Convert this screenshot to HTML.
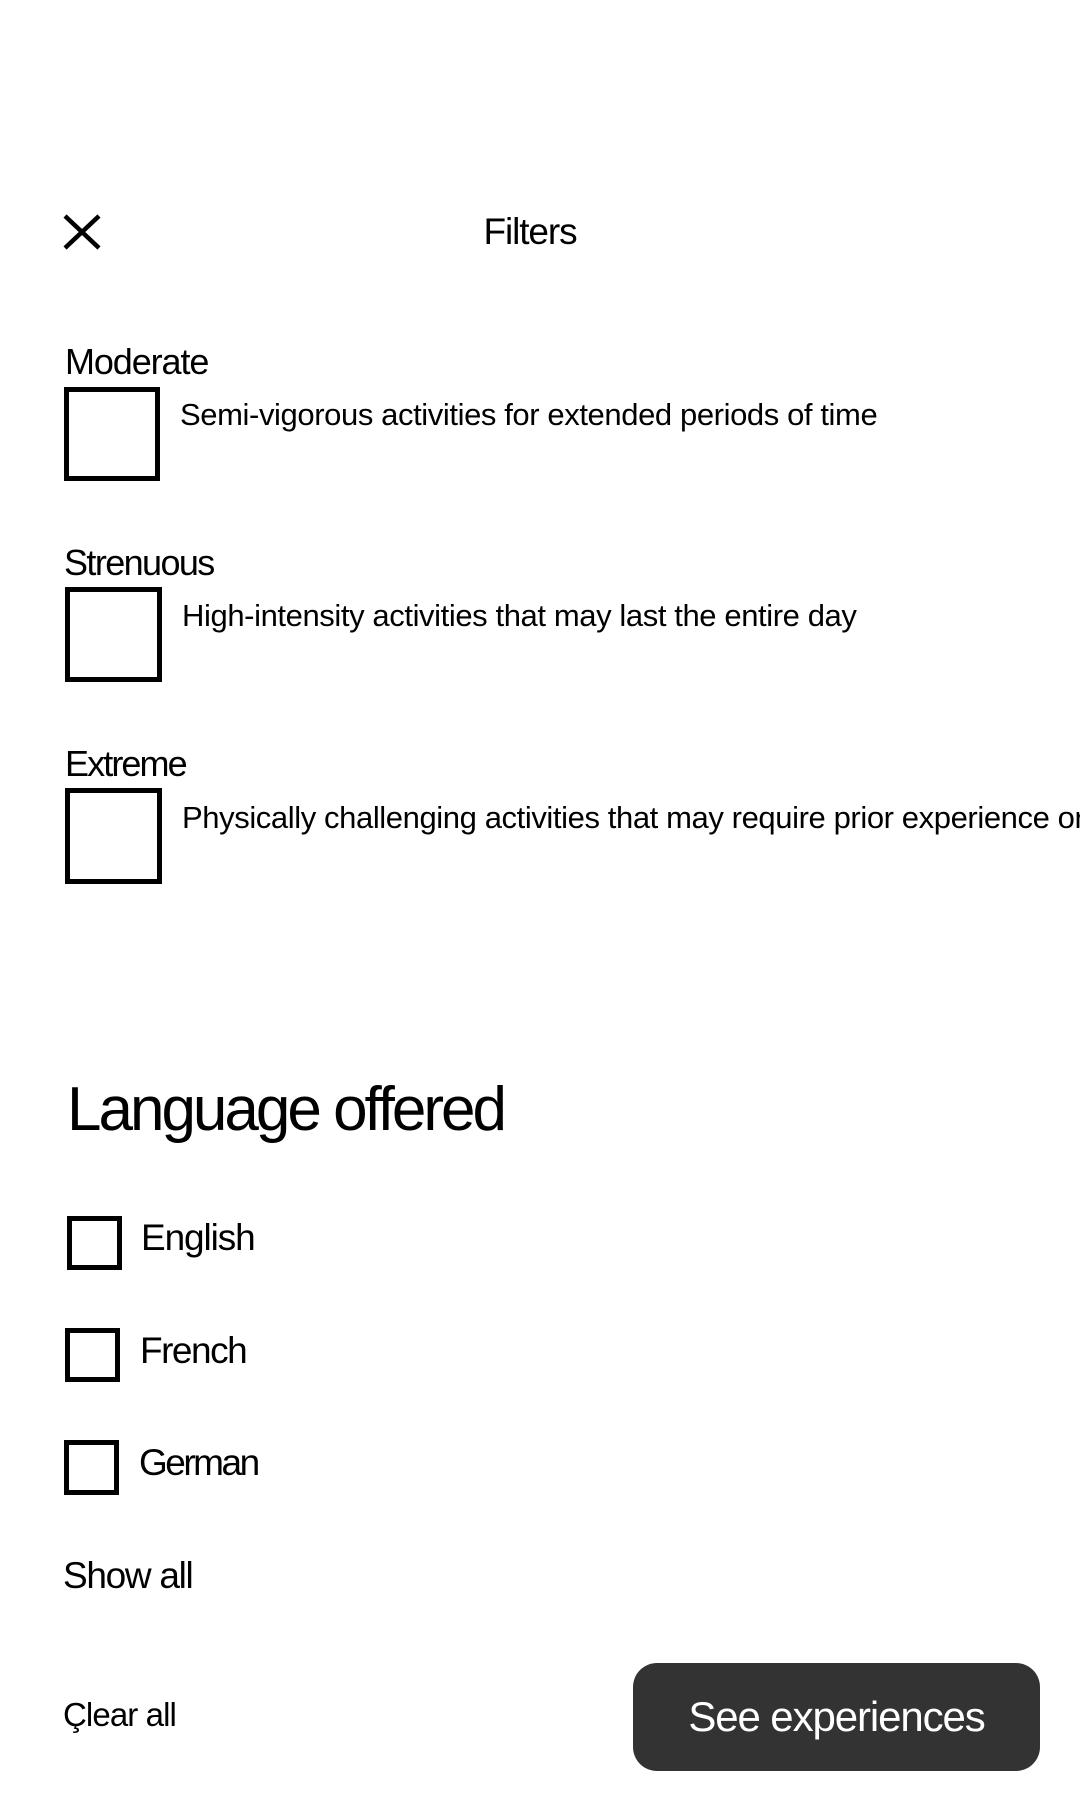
<!DOCTYPE html>
<html><head><meta charset="utf-8"><style>
body{margin:0;width:1080px;height:1800px;background:#fff;position:relative;overflow:hidden;font-family:"Liberation Sans",Arial,sans-serif;color:#000}
.t{position:absolute;line-height:1;white-space:nowrap}
.b{position:absolute;box-sizing:border-box;border:5px solid #000}
</style></head><body>
<svg style="position:absolute;left:62px;top:214px" width="40" height="36" viewBox="0 0 40 36"><path d="M3 2L37 34M37 2L3 34" stroke="#000" stroke-width="4.5" fill="none"/></svg>
<div class="t" style="left:0;width:1060px;text-align:center;font-size:37px;top:213px;letter-spacing:-1.1px">Filters</div>

<div class="t" style="left:65px;font-size:36px;top:344px;letter-spacing:-1.1px">Moderate</div>
<div class="b" style="left:64px;top:387px;width:96px;height:94px"></div>
<div class="t" style="left:180px;font-size:31px;top:399px;letter-spacing:-0.4px">Semi-vigorous activities for extended periods of time</div>

<div class="t" style="left:64px;font-size:36px;top:545px;letter-spacing:-1.6px">Strenuous</div>
<div class="b" style="left:65px;top:587px;width:97px;height:95px"></div>
<div class="t" style="left:182px;font-size:31px;top:600px;letter-spacing:-0.4px">High-intensity activities that may last the entire day</div>

<div class="t" style="left:65px;font-size:36px;top:746px;letter-spacing:-1.9px">Extreme</div>
<div class="b" style="left:65px;top:788px;width:97px;height:96px"></div>
<div class="t" style="left:182px;font-size:31px;top:802px;letter-spacing:-0.4px">Physically challenging activities that may require prior experience or</div>

<div class="t" style="left:67px;font-size:62px;top:1079px;letter-spacing:-3px">Language offered</div>

<div class="b" style="left:67px;top:1216px;width:55px;height:54px"></div>
<div class="t" style="left:141px;font-size:37px;top:1219px;letter-spacing:-1.1px">English</div>
<div class="b" style="left:65px;top:1328px;width:55px;height:54px"></div>
<div class="t" style="left:140px;font-size:37px;top:1332px;letter-spacing:-1.5px">French</div>
<div class="b" style="left:64px;top:1440px;width:55px;height:55px"></div>
<div class="t" style="left:139px;font-size:37px;top:1444px;letter-spacing:-2.5px">German</div>

<div class="t" style="left:63px;font-size:37px;top:1557px;letter-spacing:-1.3px">Show all</div>
<div class="t" style="left:63px;font-size:33px;top:1698px;letter-spacing:-0.9px">Çlear all</div>

<div style="position:absolute;left:633px;top:1663px;width:407px;height:108px;background:#333;border-radius:24px;color:#fff;font-size:42px;line-height:108px;text-align:center;letter-spacing:-1.1px">See experiences</div>
</body></html>
